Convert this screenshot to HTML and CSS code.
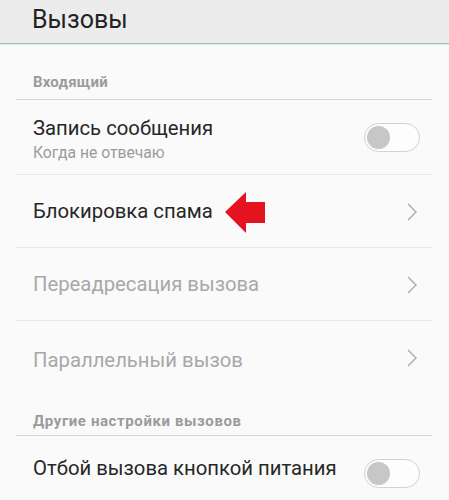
FILE: index.html
```html
<!DOCTYPE html>
<html lang="ru">
<head>
<meta charset="utf-8">
<link rel="stylesheet" href="styles.css">
</head>
<body>
<header class="topbar">
  <h1 class="title">Вызовы</h1>
</header>
<main class="list">
  <div class="section">Входящий</div>
  <div class="row row-first">
    <div class="texts">
      <div class="label">Запись сообщения</div>
      <div class="sub">Когда не отвечаю</div>
    </div>
    <span class="toggle"><span class="knob"></span></span>
  </div>
  <div class="row">
    <div class="label-wrap">
      <span class="label">Блокировка спама</span>
      <svg class="arrow" width="41" height="41" viewBox="0 0 41 41"><polygon points="0,20 21,0 21,10 40,10 40,31 21,31 21,41" fill="#e5121f"/></svg>
    </div>
    <svg class="chev" width="10" height="18" viewBox="0 0 10 18"><polyline points="1,1 9,9 1,17" fill="none" stroke="#ababab" stroke-width="1.4"/></svg>
  </div>
  <div class="row">
    <span class="label dim">Переадресация вызова</span>
    <svg class="chev" width="10" height="18" viewBox="0 0 10 18"><polyline points="1,1 9,9 1,17" fill="none" stroke="#ababab" stroke-width="1.4"/></svg>
  </div>
  <div class="row row-last">
    <span class="label dim low">Параллельный вызов</span>
    <svg class="chev" width="10" height="18" viewBox="0 0 10 18"><polyline points="1,1 9,9 1,17" fill="none" stroke="#ababab" stroke-width="1.4"/></svg>
  </div>
  <div class="section section-2">Другие настройки вызовов</div>
  <div class="row row-first">
    <span class="label high">Отбой вызова кнопкой питания</span>
    <span class="toggle"><span class="knob"></span></span>
  </div>
</main>
</body>
</html>
```
FILE: styles.css
```css
html, body {
  margin: 0;
  padding: 0;
}
body {
  background: #fafafa;
  font-family: Roboto, "Noto Sans", sans-serif;
  width: 449px;
  height: 500px;
  overflow: hidden;
}
.topbar {
  height: 43px;
  background: #ececec;
  border-bottom: 1px solid #9fc4ad;
  box-shadow: 0 1px 0 #d9ebe0;
  display: flex;
  align-items: center;
  padding-left: 32px;
}
.title {
  margin: 0;
  font-size: 25px;
  font-weight: 400;
  color: #222;
  line-height: 1;
  margin-top: -4px;
}
.list {
  padding: 0 17px 0 16px;
}
.section {
  color: #9b9b9b;
  font-weight: 700;
  font-size: 15px;
  letter-spacing: 0.2px;
  padding: 29px 0 0 17px;
  height: 26px;
  border-bottom: 1px solid #d6d6d6;
}
.section-2 {
  padding-top: 19px;
  height: 23px;
  letter-spacing: 0.6px;
}
.row {
  height: 72px;
  border-bottom: 1px solid #e6e6e6;
  display: flex;
  align-items: center;
  justify-content: space-between;
  padding: 0 15px 0 17px;
}
.row-first {
  height: 74px;
}
.row-last {
  border-bottom: none;
}
.label-wrap {
  display: flex;
  align-items: center;
  gap: 12px;
}
.label {
  font-size: 20.3px;
  color: #272727;
}
.label.dim {
  color: #a8a8a8;
}
.label.low {
  padding-top: 5px;
}
.label.high {
  padding-bottom: 10px;
}
.texts {
  display: flex;
  flex-direction: column;
  gap: 3px;
  margin-top: 4px;
}
.sub {
  font-size: 15.7px;
  color: #9a9a9a;
}
.arrow {
  display: block;
  margin-top: 3px;
}
.chev {
  display: block;
  margin-top: 2px;
}
.toggle {
  width: 53px;
  height: 27px;
  border: 1px solid #d2d2d2;
  border-radius: 15px;
  background: #fdfdfd;
  display: flex;
  align-items: center;
  padding-left: 1px;
  box-sizing: content-box;
  margin-right: -3px;
}
.knob {
  width: 23px;
  height: 23px;
  border-radius: 50%;
  background: #c7c7c7;
  margin-left: 1px;
}
```
